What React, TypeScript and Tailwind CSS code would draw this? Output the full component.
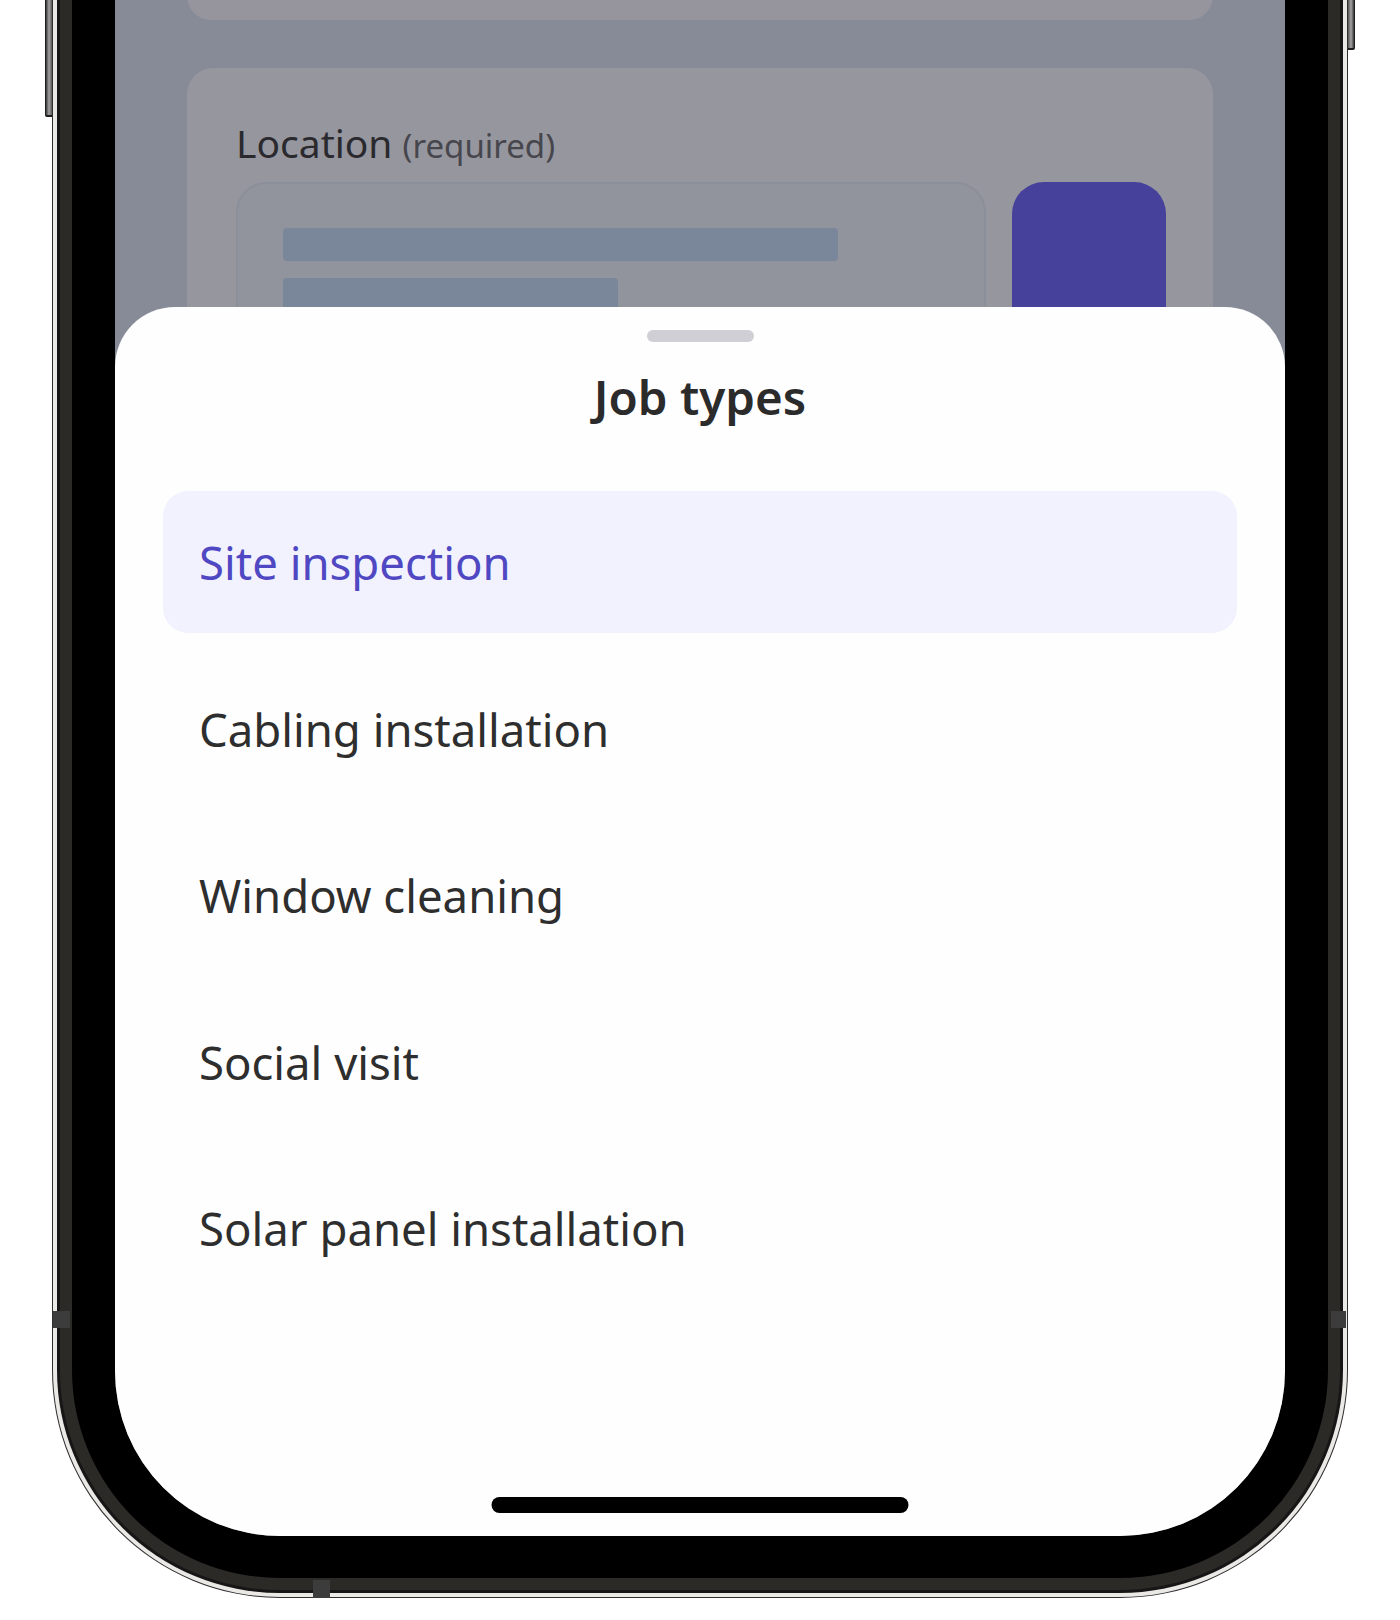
import clsx from 'clsx'

const jobTypes = [
  'Site inspection',
  'Cabling installation',
  'Window cleaning',
  'Social visit',
  'Solar panel installation',
]

function FormBehind() {
  return (
    <div className="flex flex-col gap-[48px] px-[72px]">
      <div className="h-[57px] rounded-b-[24px] bg-[#96959e]" />
      <div className="rounded-[26px] bg-[#96969f] pl-[49px] pr-[47px] pt-[49px] pb-[60px]">
        <div className="text-[39px] leading-[52px] text-[#2a2a2e]">
          Location <span className="text-[33px] text-[#46464c]">(required)</span>
        </div>
        <div className="mt-[10px] flex gap-[26px]">
          <div className="flex flex-1 flex-col gap-[17px] rounded-[30px] border-2 border-[#8b8f9a] bg-[#91939d] px-[45px] pt-[44px] pb-[40px]">
            <div className="h-[33px] w-[555px] rounded-[4px] bg-[#7a879b]" />
            <div className="h-[33px] w-[335px] rounded-[4px] bg-[#7a879b]" />
          </div>
          <div className="h-[160px] w-[154px] rounded-[32px] bg-[#46419a]" />
        </div>
      </div>
    </div>
  )
}

function JobTypesSheet() {
  return (
    <div className="absolute inset-x-0 bottom-0 top-[344px] rounded-t-[60px] bg-[#fefefe] px-[48px]">
      <div className="mx-auto mt-[23px] h-[12px] w-[107px] rounded-full bg-[#cfcfd5]" />
      <h2 className="mt-[25px] text-center text-[47.5px] font-semibold leading-[60px] text-[#2b2b2b]">
        Job types
      </h2>
      <ul className="mt-[64px] flex flex-col gap-[24.5px]">
        {jobTypes.map((name, i) => (
          <li
            key={name}
            className={clsx(
              'flex h-[142px] items-center rounded-[25px] pl-[36px] text-[45.5px] leading-[60px]',
              i === 0 ? 'bg-[#f2f2fe] text-[#5047c2]' : 'text-[#2e2e2e]'
            )}
          >
            {name}
          </li>
        ))}
      </ul>
      <div className="absolute bottom-[23px] left-1/2 h-[16px] w-[417px] -translate-x-1/2 rounded-full bg-black" />
    </div>
  )
}

export default function App() {
  return (
    <div className="relative h-[1620px] w-[1400px] overflow-hidden bg-white font-['Noto_Sans',sans-serif]">
      <div className="relative -mt-[100px] ml-[52px] w-[1296px]">
        {/* side buttons */}
        <div className="absolute -left-[7px] top-0 h-[217px] w-[7px] rounded-bl-[2px] border-b-2 border-l border-[#1c1c1c] bg-gradient-to-r from-[#3a3a3a] via-[#a5a5a5] to-[#555]" />
        <div className="absolute -right-[7px] top-0 h-[150px] w-[7px] rounded-br-[2px] border-b-2 border-r border-[#1c1c1c] bg-gradient-to-r from-[#555] via-[#a5a5a5] to-[#3a3a3a]" />

        {/* antenna breaks */}
        <div className="absolute left-[1px] top-[1411px] z-10 h-[17px] w-[17px] bg-[#3c3c3c]" />
        <div className="absolute right-[2px] top-[1411px] z-10 h-[17px] w-[15px] bg-[#3c3c3c]" />
        <div className="absolute bottom-0 left-[261px] z-10 h-[18px] w-[17px] bg-[#3c3c3c]" />

        <div className="rounded-b-[228px] bg-[#2e2e2e] px-px pb-px">
          <div className="rounded-b-[227px] bg-[#ebe9e6] px-[4px] pb-[4px]">
            <div className="rounded-b-[223px] bg-[#161616] px-[3px] pb-[3px]">
              <div className="rounded-b-[220px] bg-[#2b2a27] px-[12px] pb-[12px]">
                <div className="rounded-b-[208px] bg-black px-[43px] pb-[42px]">
                  <div className="relative h-[1636px] overflow-hidden rounded-b-[165px] bg-[#868b97]">
                    <div className="h-[63px]" />
                    <FormBehind />
                    <div className="absolute inset-x-0 bottom-0 top-[63px]">
                      <JobTypesSheet />
                    </div>
                  </div>
                </div>
              </div>
            </div>
          </div>
        </div>
      </div>
    </div>
  )
}
